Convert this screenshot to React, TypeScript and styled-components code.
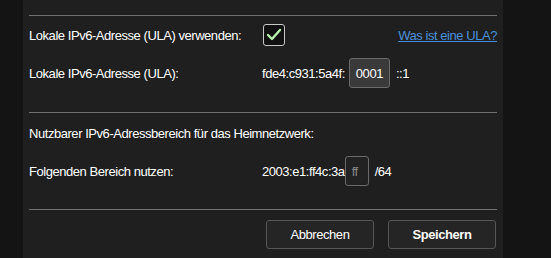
import React from 'react'
import styled, { createGlobalStyle } from 'styled-components'

const Global = createGlobalStyle`
  html, body {
    margin: 0;
    padding: 0;
    background: #141414;
    height: 258px;
    overflow: hidden;
  }
  body {
    font-family: "Liberation Sans", Arial, sans-serif;
    font-size: 13px;
    letter-spacing: -0.45px;
    color: #ffffff;
  }
`

const Page = styled.div`
  display: flex;
  width: 551px;
  height: 258px;
  background: #141414;
`

const Panel = styled.div`
  margin-left: 23px;
  width: 480px;
  height: 258px;
  background: #1f1f1f;
  padding: 15px 6px 0 6px;
  box-sizing: border-box;
  display: flex;
  flex-direction: column;
`

const Divider = styled.div`
  height: 1px;
  background: #707070;
`

const Section = styled.div`
  display: flex;
  flex-direction: column;
  padding-bottom: 20px;
`

const Row = styled.div<{ $h: number }>`
  display: flex;
  align-items: center;
  height: ${p => p.$h}px;
`

const Label = styled.div<{ $wide?: boolean }>`
  width: ${p => (p.$wide ? 'auto' : '233px')};
  flex-shrink: 0;
`

const Value = styled.div`
  display: flex;
  align-items: center;
  flex: 1;
`

const Checkbox = styled.div`
  width: 22px;
  height: 22px;
  box-sizing: border-box;
  border: 1px solid #c8c8c8;
  border-radius: 3px;
  background: #111111;
  display: flex;
  align-items: center;
  justify-content: center;
  margin-left: 1px;
`

const HelpLink = styled.a`
  margin-left: auto;
  color: #4a8fdb;
  text-decoration: underline;
  cursor: pointer;
`

const Field = styled.div<{ $w: number; $muted?: boolean }>`
  width: ${p => p.$w}px;
  height: 30px;
  box-sizing: border-box;
  border: 1px solid #6a6a6a;
  border-radius: 3px;
  background: ${p => (p.$muted ? '#222222' : '#3a3a3a')};
  color: ${p => (p.$muted ? '#8a8a8a' : '#ffffff')};
  display: flex;
  align-items: center;
  justify-content: ${p => (p.$muted ? 'flex-start' : 'center')};
  padding-left: ${p => (p.$muted ? '6px' : '0')};
`

const Suffix = styled.span<{ $gap: number }>`
  margin-left: ${p => p.$gap}px;
`

const Prefix = styled.span<{ $gap: number }>`
  margin-right: ${p => p.$gap}px;
`

const Footer = styled.div`
  display: flex;
  justify-content: flex-end;
  gap: 14px;
  padding: 10px 1px 0 0;
`

const Button = styled.button<{ $primary?: boolean }>`
  width: 108px;
  height: 29px;
  box-sizing: border-box;
  border: 1px solid #555555;
  border-radius: 3px;
  background: #252525;
  color: #ffffff;
  font-family: "Liberation Sans", Arial, sans-serif;
  font-size: 13px;
  letter-spacing: -0.45px;
  font-weight: ${p => (p.$primary ? 700 : 400)};
  cursor: pointer;
`

export default function App() {
  return (
    <>
      <Global />
      <Page>
        <Panel>
          <Divider />
          <Section>
            <Row $h={38}>
              <Label>Lokale IPv6-Adresse (ULA) verwenden:</Label>
              <Value>
                <Checkbox>
                  <svg width="16" height="14" viewBox="0 0 16 14">
                    <polyline
                      points="2,7 6,11 14,2"
                      fill="none"
                      stroke="#b8f0ae"
                      strokeWidth="2.4"
                      strokeLinecap="round"
                      strokeLinejoin="round"
                    />
                  </svg>
                </Checkbox>
                <HelpLink>Was ist eine ULA?</HelpLink>
              </Value>
            </Row>
            <Row $h={38}>
              <Label>Lokale IPv6-Adresse (ULA):</Label>
              <Value>
                <Prefix $gap={4}>fde4:c931:5a4f:</Prefix>
                <Field $w={41}>0001</Field>
                <Suffix $gap={6}>::1</Suffix>
              </Value>
            </Row>
          </Section>
          <Divider />
          <Section>
            <Row $h={40}>
              <Label $wide>Nutzbarer IPv6-Adressbereich für das Heimnetzwerk:</Label>
            </Row>
            <Row $h={36}>
              <Label>Folgenden Bereich nutzen:</Label>
              <Value>
                <Prefix $gap={0}>2003:e1:ff4c:3a</Prefix>
                <Field $w={24} $muted>ff</Field>
                <Suffix $gap={6}>/64</Suffix>
              </Value>
            </Row>
          </Section>
          <Divider />
          <Footer>
            <Button>Abbrechen</Button>
            <Button $primary>Speichern</Button>
          </Footer>
        </Panel>
      </Page>
    </>
  )
}
